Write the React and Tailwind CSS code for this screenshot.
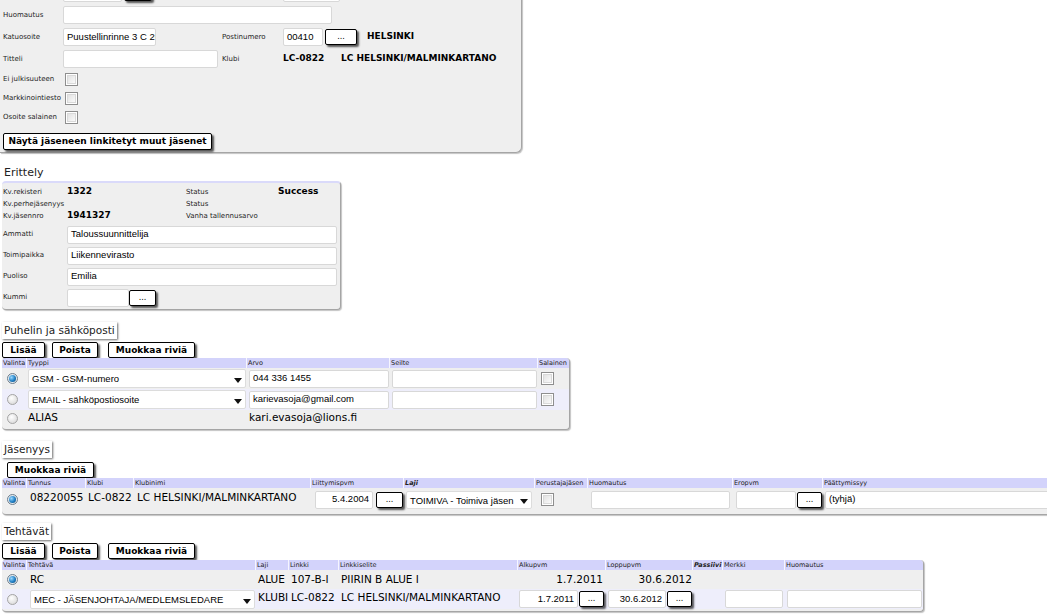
import React from "react";

const A = "font-['Liberation_Sans',Arial,sans-serif]";

function Btn({ w, children }) {
  return (
    <div className={`${w} h-[16px] shrink-0 bg-white border border-black rounded-[2px] shadow-[2px_2px_2px_rgba(0,0,0,0.65)] flex items-center justify-center font-bold text-[9px] leading-none text-black whitespace-nowrap`}>
      {children}
    </div>
  );
}

function Dots({ w = "w-[27px]" }) {
  return (
    <div className={`${w} h-[16px] shrink-0 bg-white border border-black rounded-[2px] shadow-[2px_2px_2px_rgba(0,0,0,0.65)] flex items-end justify-center pb-[3px] text-[8px] leading-none text-black`}>
      ...
    </div>
  );
}

function Inp({ w, h = "h-[18px]", right, children }) {
  return (
    <div className={`${w} ${h} shrink-0 bg-white border border-[#d8d8d8] rounded-[2px] flex items-center ${right ? "justify-end pr-[3px]" : "pl-[3px]"} text-[9.5px] ${A} text-black overflow-hidden whitespace-nowrap`}>
      {children}
    </div>
  );
}

function Sel({ w, h = "h-[19px]", children }) {
  return (
    <div className={`${w} ${h} shrink-0 bg-white border border-[#dcdcdc] rounded-[2px] relative flex items-start pt-[2px] pl-[3px] text-[9.5px] ${A} text-black whitespace-nowrap overflow-hidden`}>
      <span>{children}</span>
      <svg className="absolute right-[3px] bottom-[4px]" width="8" height="5" viewBox="0 0 8 5">
        <path d="M0 0H8L4 5Z" fill="#111" />
      </svg>
    </div>
  );
}

function Check() {
  return (
    <div className="w-[13px] h-[13px] shrink-0 border border-[#8e8e8e] bg-white p-[1px]">
      <div className="w-full h-full border border-[#d9d9d9] bg-linear-to-br from-[#e2e2e2] to-[#fafafa]" />
    </div>
  );
}

function Radio({ on }) {
  if (on)
    return (
      <div className="w-[11px] h-[11px] shrink-0 rounded-full border border-[#6f7f8d] bg-[#e4eaef] flex items-center justify-center">
        <div className="w-[7px] h-[7px] rounded-full bg-[radial-gradient(circle_at_35%_35%,#9ad8ff_0%,#1f7fc4_55%,#0b3f6e_100%)]" />
      </div>
    );
  return <div className="w-[11px] h-[11px] shrink-0 rounded-full border border-[#a4a4a4] bg-[radial-gradient(circle_at_40%_35%,#ffffff,#d2d2d2)]" />;
}

function H({ w, children, bi }) {
  return (
    <div className={`${w} shrink-0 h-[10px] bg-[#d3d3fb] border-r border-[#f6f6ff] text-[6.5px] leading-[10px] pl-[1px] text-[#222] whitespace-nowrap ${bi ? "font-bold italic" : ""}`}>
      {children}
    </div>
  );
}

function Heading({ children }) {
  return (
    <div className="ml-[2px] flex h-[17px] items-center px-[2px] bg-white shadow-[1px_1px_2px_#6e6e6e] text-[10.5px] leading-none text-[#222]">
      {children}
    </div>
  );
}

const Lbl = ({ w, children }) => (
  <div className={`${w} shrink-0 text-[7px] text-[#1e1e1e] whitespace-nowrap`}>{children}</div>
);

const TBL = "ml-[2px] bg-[#efefef] rounded-[4px] border-r border-b border-[#a5a5a5] shadow-[1px_1px_1px_#c4c4c4] overflow-hidden";
const ALT = "bg-[#eeeefb]";

export default function App() {
  return (
    <div className="w-[1047px] h-[614px] overflow-hidden bg-white font-['DejaVu_Sans',Verdana,sans-serif] text-black">
      {/* Top panel */}
      <div className="-mt-[18px] w-[522px] bg-[#efefef] rounded-br-[6px] border-r border-b border-[#a5a5a5] shadow-[1px_1px_1px_#c4c4c4] pl-[3px] pb-[2px]">
        <div className="h-[22px] flex items-center">
          <div className="w-[60px] shrink-0" />
          <Inp w="w-[59px]" />
          <div className="ml-[2px] flex">
            <Dots w="w-[28px]" />
          </div>
          <div className="w-[131px] shrink-0" />
          <Inp w="w-[57px]" />
        </div>
        <div className="h-[22px] flex items-center">
          <Lbl w="w-[60px]">Huomautus</Lbl>
          <Inp w="w-[269px]" />
        </div>
        <div className="h-[22px] flex items-center">
          <Lbl w="w-[60px]">Katuosoite</Lbl>
          <Inp w="w-[93px]">Puustellinrinne 3 C 26</Inp>
          <div className="w-[66px] shrink-0" />
          <Lbl w="w-[61px]">Postinumero</Lbl>
          <Inp w="w-[40px]">00410</Inp>
          <div className="ml-[2px] flex">
            <Dots w="w-[32px]" />
          </div>
          <div className="ml-[10px] font-bold text-[9px]">HELSINKI</div>
        </div>
        <div className="h-[22px] flex items-center">
          <Lbl w="w-[60px]">Titteli</Lbl>
          <Inp w="w-[155px]" />
          <div className="w-[4px] shrink-0" />
          <Lbl w="w-[61px]">Klubi</Lbl>
          <div className="w-[58px] shrink-0 font-bold text-[9px]">LC-0822</div>
          <div className="font-bold text-[9px] whitespace-nowrap">LC HELSINKI/MALMINKARTANO</div>
        </div>
        {["Ei julkisuuteen", "Markkinointiesto", "Osoite salainen"].map((t) => (
          <div key={t} className="h-[19px] flex items-center">
            <Lbl w="w-[62px]">{t}</Lbl>
            <Check />
          </div>
        ))}
        <div className="mt-[6px] flex">
          <Btn w="w-[209px] h-[17px]">Näytä jäseneen linkitetyt muut jäsenet</Btn>
        </div>
      </div>

      {/* Erittely */}
      <div className="pt-[13px] pl-[4px] leading-[14px] text-[11px] text-[#222]">Erittely</div>
      <div className="mt-[1px] ml-[2px] w-[339px] bg-[#efefef] rounded-[4px] border-t-2 border-t-[#dadafa] border-r border-b border-r-[#a5a5a5] border-b-[#a5a5a5] shadow-[1px_1px_1px_#c4c4c4] pl-[1px] pt-[3px] pb-[1px]">
        <div className="h-[12px] flex items-center">
          <Lbl w="w-[64px]">Kv.rekisteri</Lbl>
          <div className="w-[119px] shrink-0 font-bold text-[9px]">1322</div>
          <Lbl w="w-[92px]">Status</Lbl>
          <div className="font-bold text-[9px]">Success</div>
        </div>
        <div className="h-[12px] flex items-center">
          <Lbl w="w-[64px]">Kv.perhejäsenyys</Lbl>
          <div className="w-[119px] shrink-0" />
          <Lbl w="w-[92px]">Status</Lbl>
        </div>
        <div className="h-[12px] flex items-center">
          <Lbl w="w-[64px]">Kv.jäsennro</Lbl>
          <div className="w-[119px] shrink-0 font-bold text-[9px]">1941327</div>
          <Lbl w="w-[92px]">Vanha tallennusarvo</Lbl>
        </div>
        <div className="mt-[2px]" />
        {[
          ["Ammatti", "Taloussuunnittelija"],
          ["Toimipaikka", "Liikennevirasto"],
          ["Puoliso", "Emilia"],
        ].map(([l, v]) => (
          <div key={l} className="h-[21px] flex items-center">
            <Lbl w="w-[64px]">{l}</Lbl>
            <Inp w="w-[270px]">{v}</Inp>
          </div>
        ))}
        <div className="h-[21px] flex items-center">
          <Lbl w="w-[64px]">Kummi</Lbl>
          <Inp w="w-[62px]" />
          <Dots />
        </div>
      </div>

      {/* Puhelin ja sähköposti */}
      <div className="mt-[12px] flex">
        <Heading>Puhelin ja sähköposti</Heading>
      </div>
      <div className="mt-[3px] ml-[2px] flex">
        <Btn w="w-[43px]">Lisää</Btn>
        <div className="ml-[7px] flex">
          <Btn w="w-[46px]">Poista</Btn>
        </div>
        <div className="ml-[10px] flex">
          <Btn w="w-[87px]">Muokkaa riviä</Btn>
        </div>
      </div>
      <div className={`${TBL} w-[568px]`}>
        <div className="flex">
          <H w="w-[25px]">Valinta</H>
          <H w="w-[220px]">Tyyppi</H>
          <H w="w-[143px]">Arvo</H>
          <H w="w-[148px]">Seilte</H>
          <H w="w-[32px]">Salainen</H>
        </div>
        <div className="h-[21px] flex items-center">
          <div className="w-[25px] shrink-0 pl-[5px]"><Radio on /></div>
          <div className="w-[220px] shrink-0 pl-[1px]"><Sel w="w-[218px]">GSM - GSM-numero</Sel></div>
          <div className="w-[143px] shrink-0 pl-[2px]"><Inp w="w-[140px]">044 336 1455</Inp></div>
          <div className="w-[148px] shrink-0 pl-[2px]"><Inp w="w-[145px]" /></div>
          <div className="w-[32px] shrink-0 pl-[3px]"><Check /></div>
        </div>
        <div className={`h-[21px] flex items-center ${ALT}`}>
          <div className="w-[25px] shrink-0 pl-[5px]"><Radio /></div>
          <div className="w-[220px] shrink-0 pl-[1px]"><Sel w="w-[218px]">EMAIL - sähköpostiosoite</Sel></div>
          <div className="w-[143px] shrink-0 pl-[2px]"><Inp w="w-[140px]">karievasoja@gmail.com</Inp></div>
          <div className="w-[148px] shrink-0 pl-[2px]"><Inp w="w-[145px]" /></div>
          <div className="w-[32px] shrink-0 pl-[3px]"><Check /></div>
        </div>
        <div className="h-[16px] flex items-center text-[10.5px]">
          <div className="w-[25px] shrink-0 pl-[5px]"><Radio /></div>
          <div className="w-[220px] shrink-0 pl-[1px]">ALIAS</div>
          <div className="w-[143px] shrink-0 pl-[2px] whitespace-nowrap">kari.evasoja@lions.fi</div>
        </div>
        <div className="h-[3px]" />
      </div>

      {/* Jäsenyys */}
      <div className="mt-[11px] flex">
        <Heading>Jäsenyys</Heading>
      </div>
      <div className="mt-[4px] ml-[7px] flex">
        <Btn w="w-[87px]">Muokkaa riviä</Btn>
      </div>
      <div className={`${TBL} w-[1060px]`}>
        <div className="flex">
          <H w="w-[25px]">Valinta</H>
          <H w="w-[59px]">Tunnus</H>
          <H w="w-[48px]">Klubi</H>
          <H w="w-[177px]">Klubinimi</H>
          <H w="w-[93px]">Liittymispvm</H>
          <H w="w-[131px]" bi>Laji</H>
          <H w="w-[53px]">Perustajajäsen</H>
          <H w="w-[145px]">Huomautus</H>
          <H w="w-[90px]">Eropvm</H>
          <H w="w-[239px]">Päättymissyy</H>
        </div>
        <div className="h-[23px] flex items-center text-[10.5px]">
          <div className="w-[25px] shrink-0 pl-[5px]"><Radio on /></div>
          <div className="w-[59px] shrink-0 pl-[3px] self-start pt-[2px]">08220055</div>
          <div className="w-[48px] shrink-0 pl-[2px] self-start pt-[2px] whitespace-nowrap">LC-0822</div>
          <div className="w-[177px] shrink-0 pl-[3px] self-start pt-[2px] whitespace-nowrap">LC HELSINKI/MALMINKARTANO</div>
          <div className="w-[93px] shrink-0 pl-[4px] flex items-center gap-[3px]">
            <Inp w="w-[58px]" right>5.4.2004</Inp>
            <Dots />
          </div>
          <div className="w-[131px] shrink-0 pl-[2px]"><Sel w="w-[126px]" h="h-[18px]">TOIMIVA - Toimiva jäsen</Sel></div>
          <div className="w-[53px] shrink-0 pl-[6px]"><Check /></div>
          <div className="w-[145px] shrink-0 pl-[3px]"><Inp w="w-[139px]" /></div>
          <div className="w-[90px] shrink-0 pl-[3px] flex items-center gap-[1px]">
            <Inp w="w-[60px]" />
            <Dots w="w-[25px]" />
          </div>
          <div className="w-[239px] shrink-0 pl-[2px]"><Inp w="w-[234px]">(tyhjä)</Inp></div>
        </div>
        <div className="h-[3px]" />
      </div>

      {/* Tehtävät */}
      <div className="mt-[8px] flex">
        <Heading>Tehtävät</Heading>
      </div>
      <div className="mt-[3px] ml-[2px] flex">
        <Btn w="w-[43px]">Lisää</Btn>
        <div className="ml-[7px] flex">
          <Btn w="w-[46px]">Poista</Btn>
        </div>
        <div className="ml-[10px] flex">
          <Btn w="w-[87px]">Muokkaa riviä</Btn>
        </div>
      </div>
      <div className={`mt-[1px] ${TBL} w-[922px]`}>
        <div className="flex">
          <H w="w-[25px]">Valinta</H>
          <H w="w-[229px]">Tehtävä</H>
          <H w="w-[33px]">Laji</H>
          <H w="w-[50px]">Linkki</H>
          <H w="w-[179px]">Linkkiselite</H>
          <H w="w-[88px]">Alkupvm</H>
          <H w="w-[87px]">Loppupvm</H>
          <H w="w-[30px]" bi>Passiivi</H>
          <H w="w-[62px]">Merkki</H>
          <H w="w-[139px]">Huomautus</H>
        </div>
        <div className="h-[19px] flex items-center text-[10.5px] whitespace-nowrap">
          <div className="w-[25px] shrink-0 pl-[5px]"><Radio on /></div>
          <div className="w-[229px] shrink-0 pl-[3px]">RC</div>
          <div className="w-[33px] shrink-0 pl-[2px]">ALUE</div>
          <div className="w-[50px] shrink-0 pl-[2px]">107-B-I</div>
          <div className="w-[179px] shrink-0 pl-[2px]">PIIRIN B ALUE I</div>
          <div className="w-[88px] shrink-0 pr-[3px] text-right">1.7.2011</div>
          <div className="w-[87px] shrink-0 pr-[1px] text-right">30.6.2012</div>
        </div>
        <div className={`h-[20px] flex items-center text-[10.5px] whitespace-nowrap ${ALT}`}>
          <div className="w-[25px] shrink-0 pl-[5px]"><Radio /></div>
          <div className="w-[229px] shrink-0 pl-[3px]"><Sel w="w-[225px]">MEC - JÄSENJOHTAJA/MEDLEMSLEDARE</Sel></div>
          <div className="w-[33px] shrink-0 pl-[2px] self-start pt-[1px]">KLUBI</div>
          <div className="w-[50px] shrink-0 pl-[2px] self-start pt-[1px]">LC-0822</div>
          <div className="w-[179px] shrink-0 pl-[2px] self-start pt-[1px]">LC HELSINKI/MALMINKARTANO</div>
          <div className="w-[88px] shrink-0 pl-[1px] flex items-center gap-[1px]">
            <Inp w="w-[59px]" right>1.7.2011</Inp>
            <Dots w="w-[25px]" />
          </div>
          <div className="w-[87px] shrink-0 pl-[2px] flex items-center gap-[1px]">
            <Inp w="w-[58px]" right>30.6.2012</Inp>
            <Dots w="w-[25px]" />
          </div>
          <div className="w-[30px] shrink-0" />
          <div className="w-[62px] shrink-0 pl-[2px]"><Inp w="w-[58px]" /></div>
          <div className="w-[139px] shrink-0 pl-[2px]"><Inp w="w-[135px]" /></div>
        </div>
        <div className="h-[2px]" />
      </div>
    </div>
  );
}
